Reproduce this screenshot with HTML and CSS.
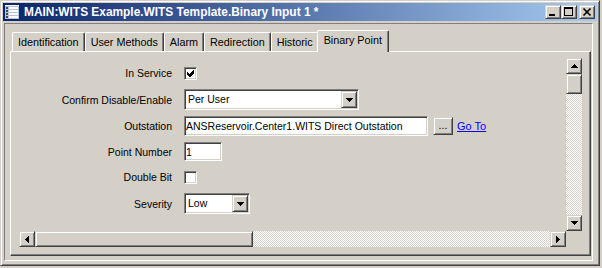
FILE: index.html
```html
<!DOCTYPE html>
<html lang="en">
<head>
    <meta charset="UTF-8">
    <title>MAIN:WITS Example.WITS Template.Binary Input 1 *</title>
    <link rel="stylesheet" href="styles.css">
</head>
<body>
    <div class="window">
        <div class="titlebar">
            <svg class="app-icon" width="16" height="16" viewBox="0 0 16 16" shape-rendering="crispEdges">
                <rect x="1" y="1" width="14" height="14" fill="#b8c4d8"/>
                <rect x="1" y="1" width="14" height="1" fill="#ffffff"/>
                <rect x="2" y="3" width="2" height="2" fill="#404850"/>
                <rect x="5" y="3" width="9" height="2" fill="#ffffff"/>
                <rect x="2" y="6" width="2" height="2" fill="#404850"/>
                <rect x="5" y="6" width="9" height="2" fill="#ffffff"/>
                <rect x="2" y="9" width="2" height="2" fill="#404850"/>
                <rect x="5" y="9" width="9" height="2" fill="#ffffff"/>
                <rect x="2" y="12" width="2" height="2" fill="#404850"/>
                <rect x="5" y="12" width="9" height="2" fill="#ffffff"/>
            </svg>
            <span class="title">MAIN:WITS Example.WITS Template.Binary Input 1 *</span>
            <div class="caption-buttons">
                <span class="cbtn">
                    <svg width="14" height="12" viewBox="0 0 14 12" shape-rendering="crispEdges"><rect x="3" y="8" width="6" height="2"/></svg>
                </span>
                <span class="cbtn">
                    <svg width="14" height="12" viewBox="0 0 14 12" shape-rendering="crispEdges">
                        <rect x="2" y="1" width="9" height="2"/><rect x="2" y="1" width="1" height="9"/>
                        <rect x="10" y="1" width="1" height="9"/><rect x="2" y="9" width="9" height="1"/>
                    </svg>
                </span>
                <span class="cbtn close">
                    <svg width="14" height="12" viewBox="0 0 14 12"><path d="M3.5 2.5 L10.5 9.5 M10.5 2.5 L3.5 9.5" stroke="#000" stroke-width="1.7"/></svg>
                </span>
            </div>
        </div>

        <div class="client">
            <div class="tabs">
                <div class="tab">Identification</div>
                <div class="tab">User Methods</div>
                <div class="tab">Alarm</div>
                <div class="tab">Redirection</div>
                <div class="tab">Historic</div>
                <div class="tab active">Binary Point</div>
            </div>

            <div class="tabpage">
                <div class="scrollview">
                    <div class="form">
                        <div class="label">In Service</div>
                        <div class="field">
                            <span class="checkbox">
                                <svg width="7" height="7" viewBox="0 0 7 7" shape-rendering="crispEdges"><path d="M0 2 L2 4 L6 0 L7 0 L7 3 L3 7 L2 7 L0 5 Z"/></svg>
                            </span>
                        </div>

                        <div class="label">Confirm Disable/Enable</div>
                        <div class="field">
                            <div class="combo wide">
                                <span class="combo-value">Per User</span>
                                <span class="combo-btn">
                                    <svg width="7" height="4" viewBox="0 0 7 4" shape-rendering="crispEdges"><path d="M0 0 H7 V1 H6 V2 H5 V3 H4 V4 H3 V3 H2 V2 H1 V1 H0 Z"/></svg>
                                </span>
                            </div>
                        </div>

                        <div class="label">Outstation</div>
                        <div class="field">
                            <div class="textbox outstation">ANSReservoir.Center1.WITS Direct Outstation</div>
                            <span class="button browse">...</span>
                            <a class="link" href="#">Go To</a>
                        </div>

                        <div class="label">Point Number</div>
                        <div class="field">
                            <div class="textbox number">1</div>
                        </div>

                        <div class="label">Double Bit</div>
                        <div class="field">
                            <span class="checkbox"></span>
                        </div>

                        <div class="label">Severity</div>
                        <div class="field">
                            <div class="combo narrow">
                                <span class="combo-value">Low</span>
                                <span class="combo-btn">
                                    <svg width="7" height="4" viewBox="0 0 7 4" shape-rendering="crispEdges"><path d="M0 0 H7 V1 H6 V2 H5 V3 H4 V4 H3 V3 H2 V2 H1 V1 H0 Z"/></svg>
                                </span>
                            </div>
                        </div>
                    </div>

                    <div class="vscroll">
                        <span class="sbtn">
                            <svg width="7" height="4" viewBox="0 0 7 4" shape-rendering="crispEdges"><path d="M3 0 H4 V1 H5 V2 H6 V3 H7 V4 H0 V3 H1 V2 H2 V1 H3 Z"/></svg>
                        </span>
                        <span class="thumb vthumb"></span>
                        <span class="track"></span>
                        <span class="sbtn">
                            <svg width="7" height="4" viewBox="0 0 7 4" shape-rendering="crispEdges"><path d="M0 0 H7 V1 H6 V2 H5 V3 H4 V4 H3 V3 H2 V2 H1 V1 H0 Z"/></svg>
                        </span>
                    </div>

                    <div class="hscroll">
                        <span class="sbtn">
                            <svg width="4" height="7" viewBox="0 0 4 7" shape-rendering="crispEdges"><path d="M3 0 H4 V7 H3 V6 H2 V5 H1 V4 H0 V3 H1 V2 H2 V1 H3 Z"/></svg>
                        </span>
                        <span class="thumb hthumb"></span>
                        <span class="track"></span>
                        <span class="sbtn">
                            <svg width="4" height="7" viewBox="0 0 4 7" shape-rendering="crispEdges"><path d="M0 0 H1 V1 H2 V2 H3 V3 H4 V4 H3 V5 H2 V6 H1 V7 H0 Z"/></svg>
                        </span>
                    </div>

                    <div class="corner"></div>
                </div>
            </div>
        </div>
    </div>
</body>
</html>
```

FILE: styles.css
```css
body {
    margin: 0;
    background: #d4d0c8;
    font-family: "Liberation Sans", Arial, sans-serif;
    overflow: hidden;
}
.window {
    width: 600px;
    height: 266px;
    box-sizing: border-box;
    display: flex;
    flex-direction: column;
    background: #d4d0c8;
    border: 1px solid;
    border-color: #d4d0c8 #404040 #404040 #d4d0c8;
    box-shadow: inset 1px 1px #fff, inset -1px -1px #808080;
    padding: 2px;
}

/* title bar */
.titlebar {
    height: 18px;
    flex: none;
    display: flex;
    align-items: center;
    padding: 0 2px 0 1px;
    background: linear-gradient(to right, #0a246a, #a6caf0);
    color: #fff;
}
.app-icon {
    margin-right: 4px;
    flex: none;
}
.title {
    font-weight: bold;
    font-size: 11.9px;
    white-space: nowrap;
}
.caption-buttons {
    margin-left: auto;
    display: flex;
}
.cbtn {
    width: 16px;
    height: 14px;
    box-sizing: border-box;
    background: #d4d0c8;
    border: 1px solid;
    border-color: #d4d0c8 #404040 #404040 #d4d0c8;
    box-shadow: inset 1px 1px #fff, inset -1px -1px #808080;
    display: block;
}
.cbtn svg {
    display: block;
}
.cbtn.close {
    margin-left: 2px;
}

/* client area */
.client {
    flex: 1;
    display: flex;
    flex-direction: column;
    margin: 2px 4px 2px 1px;
    border: 1px solid;
    border-color: #808080 #fff #fff #808080;
    padding: 6px 1px 4px 5px;
}
.tabs {
    height: 21px;
    flex: none;
    display: flex;
    align-items: flex-end;
    padding-left: 2px;
    font-size: 10.8px;
}
.tab {
    height: 19px;
    box-sizing: border-box;
    padding: 2px 5px 0;
    line-height: 15px;
    border: 1px solid;
    border-bottom: none;
    border-color: #fff #404040 transparent #fff;
    box-shadow: inset -1px 0 #808080;
    border-radius: 2px 2px 0 0;
    white-space: nowrap;
}
.tab.active {
    height: 22px;
    margin: 0 -2px -1px;
    padding: 2px 6px 0;
    position: relative;
    z-index: 1;
    background: #d4d0c8;
}
.tabpage {
    flex: 1;
    display: flex;
    border: 1px solid;
    border-color: #fff #404040 #404040 #fff;
    box-shadow: inset -1px -1px #808080;
    padding: 6px 8px 8px 8px;
}

/* scrolled panel */
.scrollview {
    flex: 1;
    display: grid;
    grid-template-columns: 1fr 16px;
    grid-template-rows: 1fr 16px;
    overflow: hidden;
}
.form {
    display: grid;
    grid-template-columns: 153px auto;
    grid-template-rows: 26px 27px 26px 25px 26px 27px;
    align-content: start;
    align-items: center;
    column-gap: 12px;
    padding-top: 2px;
    font-size: 10.5px;
}
.label {
    text-align: right;
    white-space: nowrap;
}
.field {
    display: flex;
    align-items: center;
}
.checkbox {
    width: 13px;
    height: 13px;
    box-sizing: border-box;
    background: #fff;
    border: 1px solid;
    border-color: #808080 #fff #fff #808080;
    box-shadow: inset 1px 1px #404040, inset -1px -1px #d4d0c8;
    display: flex;
    align-items: center;
    justify-content: center;
}
.combo {
    height: 21px;
    box-sizing: border-box;
    display: flex;
    padding: 1px;
    background: #fff;
    border: 1px solid;
    border-color: #808080 #fff #fff #808080;
    box-shadow: inset 1px 1px #404040, inset -1px -1px #d4d0c8;
}
.combo.wide {
    width: 175px;
}
.combo.narrow {
    width: 66px;
}
.combo-value {
    flex: 1;
    padding-left: 2px;
    line-height: 17px;
}
.combo-btn,
.sbtn,
.thumb,
.button {
    box-sizing: border-box;
    background: #d4d0c8;
    border: 1px solid;
    border-color: #d4d0c8 #404040 #404040 #d4d0c8;
    box-shadow: inset 1px 1px #fff, inset -1px -1px #808080;
}
.combo-btn {
    width: 16px;
    display: flex;
    align-items: center;
    justify-content: center;
}
.textbox {
    height: 20px;
    box-sizing: border-box;
    padding: 0 1px;
    line-height: 18px;
    background: #fff;
    border: 1px solid;
    border-color: #808080 #fff #fff #808080;
    box-shadow: inset 1px 1px #404040, inset -1px -1px #d4d0c8;
    white-space: nowrap;
    overflow: hidden;
}
.textbox.outstation {
    width: 244px;
}
.textbox.number {
    width: 38px;
    height: 19px;
}
.button.browse {
    width: 20px;
    height: 18px;
    margin-left: 5px;
    text-align: center;
    line-height: 14px;
}
.link {
    margin-left: 4px;
    color: #0000ff;
    font-size: 11px;
}

.vscroll {
    display: flex;
    flex-direction: column;
}
.hscroll {
    display: flex;
}
.sbtn {
    width: 16px;
    height: 16px;
    flex: none;
    display: flex;
    align-items: center;
    justify-content: center;
}
.vthumb {
    height: 20px;
}
.hthumb {
    width: 218px;
}
.track {
    flex: 1;
    background: repeating-conic-gradient(#fff 0 25%, #d4d0c8 0 50%) 0 0 / 2px 2px;
}
.corner {
    background: #d4d0c8;
}
```
